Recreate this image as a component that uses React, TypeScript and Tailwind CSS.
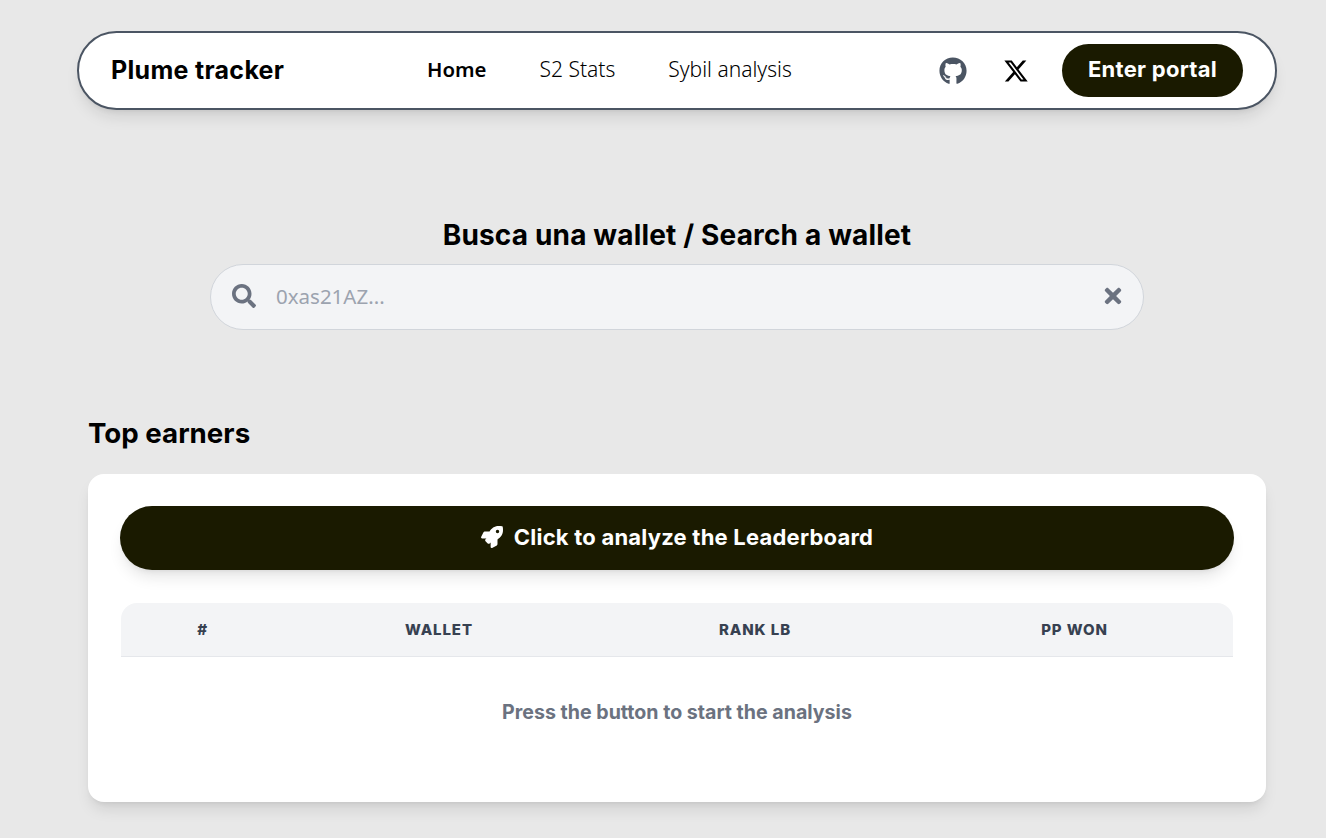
import { FaGithub, FaRocket, FaSearch, FaTimes } from "react-icons/fa";
import { FaXTwitter } from "react-icons/fa6";

const heading = "font-['Inter',sans-serif]";
const body = "font-['Noto_Sans',sans-serif]";
const columns = ["#", "WALLET", "RANK LB", "PP WON"];

function Navbar() {
  return (
    <nav className="-mx-[11px] flex h-[79px] items-center rounded-full border-2 border-[#4b5563] bg-white px-[32px] shadow-[0_10px_15px_-3px_rgba(0,0,0,0.1),0_4px_6px_-4px_rgba(0,0,0,0.1)]">
      <span className={`${heading} w-[316px] text-[25px] font-bold tracking-[0.3px] text-black`}>
        Plume tracker
      </span>
      <div className={`${body} flex items-center gap-[53px] pb-[2px] text-[21px] text-black`}>
        <a className="text-[20.4px] font-semibold">Home</a>
        <a className="font-light">S2 Stats</a>
        <a className="font-light">Sybil analysis</a>
      </div>
      <div className="ml-auto flex items-center">
        <FaGithub className="text-[28px] text-[#4b5563]" />
        <FaXTwitter className="ml-[36px] text-[26px] text-black" />
        <button className={`${heading} ml-[33px] h-[53px] w-[181px] rounded-full bg-[#1a1a00] pb-[3px] text-[22px] font-bold tracking-[0.27px] text-white`}>
          Enter portal
        </button>
      </div>
    </nav>
  );
}

function SearchBox() {
  return (
    <section className="mt-[104px] flex flex-col items-center">
      <h1 className={`${heading} pt-[2px] text-[28px] leading-[38px] font-bold tracking-[0.16px] text-black`}>
        Busca una wallet / Search a wallet
      </h1>
      <div className="mt-[10px] flex h-[66px] w-[934px] items-center rounded-full border border-[#d1d5db] bg-[#f3f4f6] pr-[18px] pb-[3px] pl-[20px]">
        <FaSearch className="ml-px text-[24px] text-[#6b7280]" />
        <span className={`${body} ml-[20px] pt-[2px] text-[20.5px] text-[#9ca3af]`}>0xas21AZ...</span>
        <FaTimes className="ml-auto text-[24px] text-[#6b7280]" />
      </div>
    </section>
  );
}

function Leaderboard() {
  return (
    <section className="mt-[83px]">
      <h2 className={`${heading} text-[27.7px] leading-[40px] font-bold text-black`}>Top earners</h2>
      <div className="mt-[21px] h-[328px] rounded-2xl bg-white p-[32px] shadow-[0_10px_15px_-3px_rgba(0,0,0,0.1),0_4px_6px_-4px_rgba(0,0,0,0.1)]">
        <button className={`${heading} flex h-[64px] w-full items-center justify-center gap-[11px] rounded-full bg-[#1a1a00] pb-[2px] text-[22px] font-bold tracking-[0.22px] text-white shadow-[0_10px_15px_-3px_rgba(0,0,0,0.1),0_4px_6px_-4px_rgba(0,0,0,0.1)]`}>
          <FaRocket className="text-[22px]" />
          Click to analyze the Leaderboard
        </button>
        <div className="mx-px mt-[33px]">
          <div className="grid h-[54px] grid-cols-[163px_310px_322px_317px] items-center rounded-t-2xl border-b border-[#e5e7eb] bg-[#f3f4f6] pt-px text-center">
            {columns.map((label) => (
              <span key={label} className={`${heading} text-[15px] font-extrabold tracking-[0.9px] text-[#374151]`}>
                {label}
              </span>
            ))}
          </div>
          <p className={`${heading} mt-[41px] text-center text-[19.6px] leading-[28px] font-bold text-[#6b7280]`}>
            Press the button to start the analysis
          </p>
        </div>
      </div>
    </section>
  );
}

export default function App() {
  return (
    <div className="min-h-[838px] overflow-hidden bg-[#e8e8e8] pt-[31px] pr-[60px] pl-[88px]">
      <Navbar />
      <SearchBox />
      <Leaderboard />
    </div>
  );
}
